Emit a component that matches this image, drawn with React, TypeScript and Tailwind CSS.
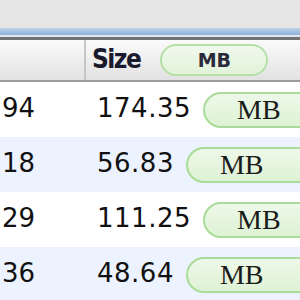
import React from "react";

const rows = [
  { id: "94", size: "174.35", bg: "bg-white" },
  { id: "18", size: "56.83", bg: "bg-[#edf3fe]" },
  { id: "29", size: "111.25", bg: "bg-white" },
  { id: "36", size: "48.64", bg: "bg-[#edf3fe]" },
];

export default function App() {
  return (
    <div className="w-[300px] h-[300px] overflow-hidden bg-white" style={{ fontFamily: '"DejaVu Sans", sans-serif' }}>
      <div className="h-[28px] bg-[#e6e6e6]" />
      <div className="h-[7px] bg-gradient-to-b from-[#bcd2ea] to-[#8fb1d8]" />
      <div className="h-[2px] bg-[#dfe6ee]" />
      <div className="h-[3px] bg-[#727272]" />
      <div className="h-[42px] flex bg-gradient-to-b from-[#fafafa] to-[#e2e2e2] border-b-2 border-[#9c9c9c]">
        <div className="w-[86px] shrink-0 border-r-2 border-[#c6c6c6]" />
        <div className="flex items-center pl-[6px] shrink-0">
          <span className="text-[26px] font-bold tracking-[-1.5px] text-[#1a1a2e] leading-none pb-[3px]" style={{ fontFamily: '"DejaVu Sans Condensed", "DejaVu Sans", sans-serif' }}>Size</span>
          <div className="ml-[20px] w-[108px] h-[32px] shrink-0 rounded-full border-2 border-[#b4e0a6] bg-gradient-to-b from-[#f0f9ec] to-[#e2f3da] flex items-center justify-center">
            <span className="text-[19px] font-bold text-[#2a2a3a] leading-none" style={{ fontFamily: '"DejaVu Sans", sans-serif' }}>MB</span>
          </div>
        </div>
      </div>
      {rows.map((r) => (
        <div key={r.id} className={`h-[55px] flex items-center ${r.bg}`}>
          <div className="w-[88px] shrink-0 pl-[2px] text-[26px] text-[#111] leading-none pb-[4px]">{r.id}</div>
          <div className="flex items-center pl-[9px] shrink-0">
            <span className="text-[26px] text-[#111] leading-none pb-[4px] tracking-[0.5px]">{r.size}</span>
            <div className="ml-[12px] w-[130px] h-[36px] shrink-0 rounded-full border-2 border-[#a9dc98] bg-gradient-to-b from-[#eef8e9] to-[#def2d4] flex items-center pl-[32px]">
              <span className="text-[28px] text-[#1a1a1a] leading-none" style={{ fontFamily: '"Liberation Serif", serif' }}>MB</span>
            </div>
          </div>
        </div>
      ))}
    </div>
  );
}
